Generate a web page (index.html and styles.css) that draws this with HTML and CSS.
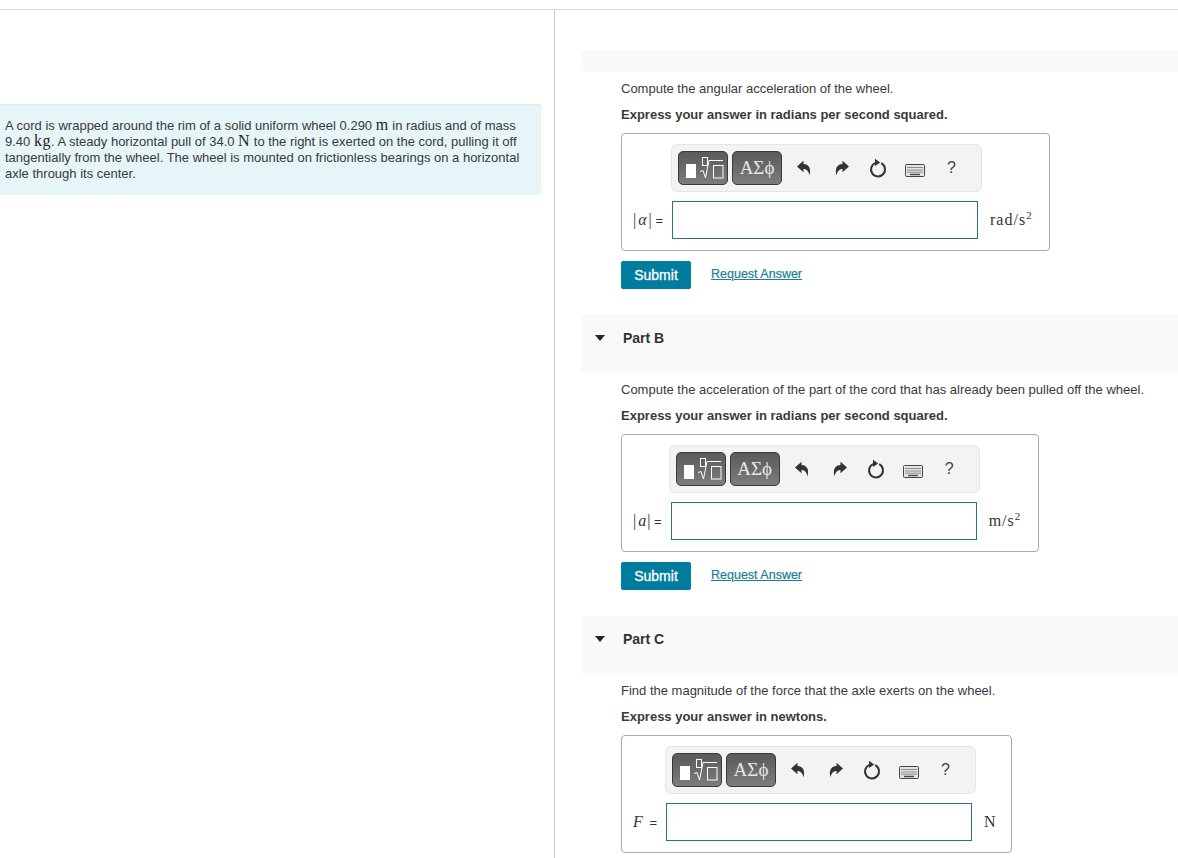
FILE: index.html
```html
<!DOCTYPE html>
<html lang="en">
<head>
<meta charset="utf-8">
<title>Wheel problem</title>
<link rel="stylesheet" href="styles.css">
</head>
<body>
<svg class="defs" aria-hidden="true">
  <symbol id="i-template" viewBox="0 0 48 32">
    <rect x="7" y="12" width="10" height="14" fill="#fff"/>
    <rect x="23.5" y="5.5" width="5" height="8" fill="none" stroke="#fff"/>
    <path d="M21 19.5 L24 18.5 L26.5 26 L30 8.5 H44" fill="none" stroke="#fff"/>
    <rect x="34.5" y="13.5" width="9.5" height="12.5" fill="none" stroke="#fff"/>
  </symbol>
  <symbol id="i-undo" viewBox="0 0 16 16">
    <path d="M1 6.5 L7.5 0.8 V4 C12.5 4 15.5 8 13.5 15.5 C12.8 11.5 10.8 9 7.5 9 V12.2 Z" fill="#333"/>
  </symbol>
  <symbol id="i-redo" viewBox="0 0 16 16">
    <path d="M15 6.5 L8.5 0.8 V4 C3.5 4 0.5 8 2.5 15.5 C3.2 11.5 5.2 9 8.5 9 V12.2 Z" fill="#333"/>
  </symbol>
  <symbol id="i-reset" viewBox="0 0 18 20">
    <path d="M12.2 5.2 A7 7 0 1 1 6.5 4.9" fill="none" stroke="#333" stroke-width="2"/>
    <path d="M6 0.8 L11.2 4.6 L6 8 Z" fill="#333"/>
  </symbol>
  <symbol id="i-keys" viewBox="0 0 20 13">
    <rect x="0.5" y="0.5" width="19" height="12" rx="1" fill="#e4e4e4" stroke="#444"/>
    <path d="M2.5 3.5 H17.5 M2.5 6 H17.5 M2.5 8.2 H17.5" stroke="#333" stroke-dasharray="1 1" fill="none"/>
    <path d="M5 10.5 H15" stroke="#444" stroke-width="1.4"/>
  </symbol>
</svg>

<div class="topbar"></div>
<main class="page">
  <aside class="intro">
    <p class="banner">A cord is wrapped around the rim of a solid uniform wheel 0.290 <span class="m">m</span> in radius and of mass 9.40 <span class="m">kg</span>. A steady horizontal pull of 34.0 <span class="m">N</span> to the right is exerted on the cord, pulling it off tangentially from the wheel. The wheel is mounted on frictionless bearings on a horizontal axle through its center.</p>
  </aside>

  <section class="parts">
    <div class="part-head part-head-a"></div>
    <div class="part-body">
      <p class="prompt">Compute the angular acceleration of the wheel.</p>
      <p class="hint">Express your answer in radians per second squared.</p>
      <div class="answer">
        <div class="toolbar">
          <button class="tool-btn" type="button"><svg class="tpl"><use href="#i-template"/></svg></button>
          <button class="tool-btn greek" type="button">ΑΣϕ</button>
          <svg class="ic ic-undo"><use href="#i-undo"/></svg>
          <svg class="ic ic-redo"><use href="#i-redo"/></svg>
          <svg class="ic ic-reset"><use href="#i-reset"/></svg>
          <svg class="ic ic-keys"><use href="#i-keys"/></svg>
          <span class="help">?</span>
        </div>
        <label class="lbl"><span class="bar">|</span><i class="var">α</i><span class="bar">|</span> =</label>
        <input class="field" type="text" aria-label="alpha">
        <span class="unit">rad/s<sup>2</sup></span>
      </div>
      <div class="actions"><button class="submit" type="button">Submit</button><a class="req" href="#">Request Answer</a></div>
    </div>

    <div class="part-head"><span class="tri"></span><h2 class="part-title">Part B</h2></div>
    <div class="part-body">
      <p class="prompt">Compute the acceleration of the part of the cord that has already been pulled off the wheel.</p>
      <p class="hint">Express your answer in radians per second squared.</p>
      <div class="answer answer-b">
        <div class="toolbar">
          <button class="tool-btn" type="button"><svg class="tpl"><use href="#i-template"/></svg></button>
          <button class="tool-btn greek" type="button">ΑΣϕ</button>
          <svg class="ic ic-undo"><use href="#i-undo"/></svg>
          <svg class="ic ic-redo"><use href="#i-redo"/></svg>
          <svg class="ic ic-reset"><use href="#i-reset"/></svg>
          <svg class="ic ic-keys"><use href="#i-keys"/></svg>
          <span class="help">?</span>
        </div>
        <label class="lbl"><span class="bar">|</span><i class="var">a</i><span class="bar">|</span> =</label>
        <input class="field" type="text" aria-label="a">
        <span class="unit">m/s<sup>2</sup></span>
      </div>
      <div class="actions"><button class="submit" type="button">Submit</button><a class="req" href="#">Request Answer</a></div>
    </div>

    <div class="part-head"><span class="tri"></span><h2 class="part-title">Part C</h2></div>
    <div class="part-body">
      <p class="prompt">Find the magnitude of the force that the axle exerts on the wheel.</p>
      <p class="hint">Express your answer in newtons.</p>
      <div class="answer answer-c">
        <div class="toolbar">
          <button class="tool-btn" type="button"><svg class="tpl"><use href="#i-template"/></svg></button>
          <button class="tool-btn greek" type="button">ΑΣϕ</button>
          <svg class="ic ic-undo"><use href="#i-undo"/></svg>
          <svg class="ic ic-redo"><use href="#i-redo"/></svg>
          <svg class="ic ic-reset"><use href="#i-reset"/></svg>
          <svg class="ic ic-keys"><use href="#i-keys"/></svg>
          <span class="help">?</span>
        </div>
        <label class="lbl"><i class="var">F</i> =</label>
        <input class="field" type="text" aria-label="F">
        <span class="unit">N</span>
      </div>
    </div>
  </section>
</main>
</body>
</html>
```

FILE: styles.css
```css
* { box-sizing: border-box; }
html, body { margin: 0; padding: 0; }
body {
  height: 858px;
  overflow: hidden;
  background: #fff;
  color: #3a3a3a;
  font-family: "Liberation Sans", Arial, sans-serif;
  font-size: 13px;
  line-height: 16px;
}
p, h2 { margin: 0; }
.defs { position: absolute; width: 0; height: 0; }

.topbar { height: 10px; border-bottom: 1px solid #ddd; }
.page { display: flex; height: 848px; }

.intro { width: 555px; flex: none; border-right: 1px solid #ccc; padding-top: 94px; }
.banner {
  width: 541px;
  height: 91px;
  padding: 13px 20px 0 5px;
  background: #e6f5f7;
  border-top: 1px solid #e0e8e9;
}
.m { font-family: "Liberation Serif", serif; font-size: 16px; line-height: 0; letter-spacing: 0.5px; color: #222; }

.parts { flex: 1; min-width: 0; padding: 40px 0 0 26px; }
.part-head { height: 57px; background: #f9f9f9; display: flex; align-items: flex-start; padding: 15px 0 0 14px; }
.part-head-a { height: 21px; padding: 0; }
.tri {
  width: 0; height: 0;
  margin-top: 5px;
  border-left: 5.5px solid transparent;
  border-right: 5.5px solid transparent;
  border-top: 6px solid #222;
}
.part-title { margin-left: 18px; font-size: 14px; font-weight: bold; color: #333; line-height: 16px; }

.part-body { padding: 10px 0 26px 40px; }
.prompt { margin-bottom: 10px; }
.hint { font-weight: bold; margin-bottom: 10px; }

.answer {
  display: inline-grid;
  grid-template-columns: auto 306px auto;
  column-gap: 9px;
  align-items: center;
  height: 118px;
  padding: 10px 16px 11px 11px;
  border: 1px solid #aaa;
  border-radius: 4px;
  vertical-align: top;
}
.answer-b { padding-right: 17px; }
.answer-c { padding-right: 14px; }
.toolbar {
  grid-column: 2 / 4;
  grid-row: 1;
  width: 311px;
  height: 48px;
  margin-left: -1px;
  margin-bottom: 9px;
  padding: 6px 0 0 6px;
  display: flex;
  align-items: flex-start;
  background: #f3f3f3;
  border: 1px solid #e6e6e6;
  border-radius: 6px;
}
.answer-b .toolbar { margin-left: -2px; }
.tool-btn {
  width: 50px;
  height: 34px;
  padding: 0;
  margin-right: 4px;
  border: 1px solid #3a3a3a;
  border-radius: 5px;
  background: linear-gradient(#5a5a5a, #7c7c7c);
  color: #e6e6e6;
  display: flex;
  align-items: center;
  justify-content: center;
}
.tool-btn + .tool-btn { margin-right: 3px; }
.greek { font-family: "Liberation Serif", serif; font-size: 19px; }
.tpl { width: 48px; height: 32px; display: block; }
.ic { flex: none; display: block; }
.ic-undo { width: 16px; height: 16px; margin: 9px 0 0 11px; }
.ic-redo { width: 16px; height: 16px; margin: 9px 0 0 22px; }
.ic-reset { width: 18px; height: 20px; margin: 7px 0 0 19px; }
.ic-keys { width: 20px; height: 13px; margin: 13px 0 0 18px; }
.help { margin: 7px 0 0 22px; font-size: 16px; line-height: 20px; color: #444; }

.lbl { grid-row: 2; grid-column: 1; white-space: nowrap; color: #333; }
.var, .bar { font-family: "Liberation Serif", serif; font-size: 16px; }
.var { padding: 0 2px; }
.answer-b .var { padding: 0 1px 0 2px; }
.answer-c .var { padding: 0 3px 0 0; }
.field {
  grid-row: 2;
  grid-column: 2;
  width: 306px;
  height: 38px;
  border: 1px solid #2b7286;
  background: #fff;
  outline: none;
}
.unit { grid-row: 2; grid-column: 3; padding-left: 3px; font-family: "Liberation Serif", serif; font-size: 16px; letter-spacing: 1px; color: #333; white-space: nowrap; }
.unit sup { font-size: 11px; line-height: 0; }

.actions { display: flex; align-items: center; margin-top: 10px; height: 28px; }
.submit {
  width: 70px;
  height: 28px;
  padding: 0;
  border: 0;
  border-radius: 2px;
  background: #007c9e;
  color: #fff;
  font-family: inherit;
  font-size: 14px;
  -webkit-text-stroke: 0.3px #fff;
}
.req { margin-left: 20px; margin-top: -3px; color: #1a7d99; font-size: 12.5px; -webkit-text-stroke: 0.2px #1a7d99; text-decoration: underline; }
```
